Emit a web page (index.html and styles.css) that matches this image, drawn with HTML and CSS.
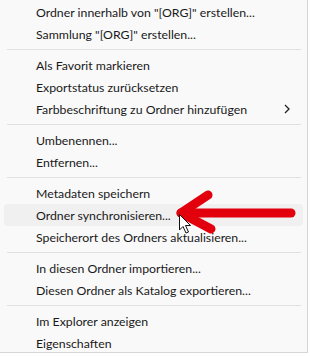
FILE: index.html
```html
<!DOCTYPE html>
<html lang="de">
<head>
    <meta charset="UTF-8">
    <title>Ordner Kontextmenü</title>
    <link rel="stylesheet" href="styles.css">
</head>
<body>
    <div class="menu">
        <div class="item">Ordner innerhalb von "[ORG]" erstellen...</div>
        <div class="item">Sammlung "[ORG]" erstellen...</div>
        <div class="sep"></div>
        <div class="item">Als Favorit markieren</div>
        <div class="item">Exportstatus zurücksetzen</div>
        <div class="item has-sub">Farbbeschriftung zu Ordner hinzufügen
            <svg class="chevron" width="8" height="10" viewBox="0 0 8 10"><path d="M2 1 L6 5 L2 9" fill="none" stroke="#222" stroke-width="1.3"/></svg>
        </div>
        <div class="sep"></div>
        <div class="item">Umbenennen...</div>
        <div class="item">Entfernen...</div>
        <div class="sep"></div>
        <div class="item">Metadaten speichern</div>
        <div class="item hover">Ordner synchronisieren...</div>
        <div class="item">Speicherort des Ordners aktualisieren...</div>
        <div class="sep"></div>
        <div class="item">In diesen Ordner importieren...</div>
        <div class="item">Diesen Ordner als Katalog exportieren...</div>
        <div class="sep"></div>
        <div class="item">Im Explorer anzeigen</div>
        <div class="item">Eigenschaften</div>

        <!-- red annotation arrow + mouse pointer -->
        <svg class="annotation" width="310" height="356" viewBox="0 0 310 356">
            <g fill="none" stroke="#e2000c" stroke-width="9" stroke-linecap="round" stroke-linejoin="round">
                <path d="M181 213 L291 213"/>
                <path d="M208 195 L181 213 L211 229"/>
            </g>
            <path d="M179.5 214.5 L179.5 230 L183 226.5 L186 233 L188.5 232 L185.5 225.5 L190.5 225.5 Z" fill="#fff" stroke="#111" stroke-width="1" stroke-linejoin="round"/>
        </svg>
    </div>
</body>
</html>
```
FILE: styles.css
```css
body {
    margin: 0;
    background: #ffffff;
    font-family: Lato, "Noto Sans", sans-serif;
}

.menu {
    position: relative;
    width: 308px;
    height: 353px;
    box-sizing: border-box;
    padding: 1px 0 0 0;
    background: #f9f9f9;
    border-right: 1px solid #d6d6d6;
    border-bottom: 1px solid #d6d6d6;
}

.item {
    display: flex;
    align-items: center;
    height: 22px;
    margin: 0 4px;
    padding-left: 32px;
    border-radius: 4px;
    font-size: 12.3px;
    color: #1a1a1a;
    white-space: nowrap;
}

.item.hover {
    background: #f0f0f0;
}

.has-sub {
    padding-right: 12px;
}

.chevron {
    display: block;
    margin-left: auto;
}

.sep {
    height: 1px;
    margin: 4px 6px 4px 7px;
    background: #e0e0e0;
}

.annotation {
    position: absolute;
    left: 0;
    top: 0;
    pointer-events: none;
}
```
